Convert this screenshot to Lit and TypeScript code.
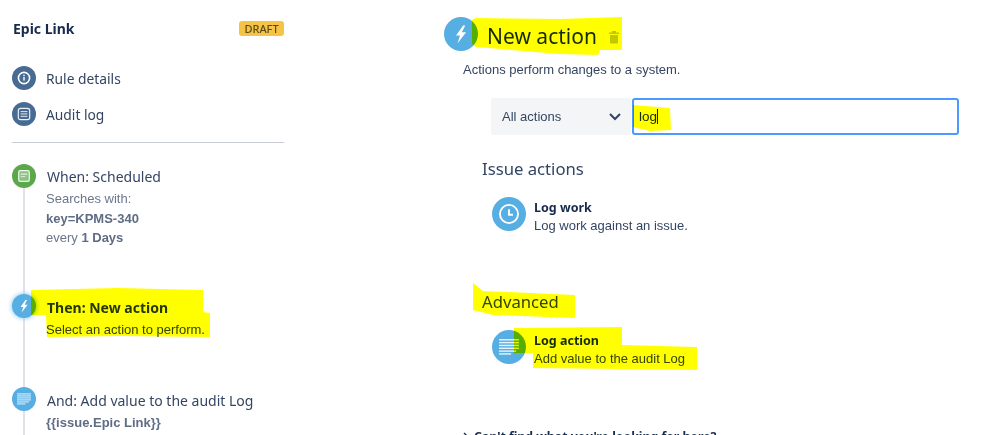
import { LitElement, html, css, svg } from "lit";
import { customElement } from "lit/decorators.js";

const bolt = svg`<path d="M13.5 6 8.5 13h2.8l-1.7 5.5 6-7.7h-3L15 6z" fill="#fff"/>`;
const lines = svg`<g fill="#fff" opacity=".85"><rect x="5" y="6.4" width="14" height="1"/><rect x="5" y="8.4" width="14" height="1"/><rect x="5" y="10.4" width="14" height="1"/><rect x="5" y="12.4" width="14" height="1"/><rect x="5" y="14.4" width="12" height="1"/><rect x="5" y="16.4" width="8.5" height="1"/></g>`;
const info = svg`<circle cx="12" cy="12" r="5.6" fill="none" stroke="#fff" stroke-width="1.6"/><rect x="11.3" y="11" width="1.4" height="3.6" fill="#fff"/><rect x="11.3" y="8.8" width="1.4" height="1.4" fill="#fff"/>`;
const audit = svg`<rect x="6.3" y="6.3" width="11.4" height="11.4" rx="2.2" fill="none" stroke="#fff" stroke-width="1.2" opacity=".9"/><g fill="#fff" opacity=".75"><rect x="8.6" y="9" width="6.8" height="1.1"/><rect x="8.6" y="11.4" width="6.8" height="1.1"/><rect x="8.6" y="13.8" width="6.8" height="1.1"/></g>`;
const cal = svg`<rect x="6.7" y="6.7" width="10.6" height="10.6" rx="1.6" fill="#ffffff55" stroke="#fff" stroke-width="1.2" opacity=".9"/><rect x="8.6" y="9.5" width="6.8" height="1.2" fill="#fff" opacity=".8"/><rect x="8.6" y="12" width="4.8" height="1.2" fill="#fff" opacity=".6"/>`;
const clock = svg`<circle cx="12" cy="12" r="6.4" fill="none" stroke="#fff" stroke-width="1.3"/><path d="M12 8.6v3.9h2.8" fill="none" stroke="#fff" stroke-width="1.3"/>`;

const highlights = [
  "31,290 118,288 203,290 203,312 210,313 210,337 120,336 47,337 46,315 31,315",
  "472,20 476,18 560,19 622,17 622,50 600,50 598,55 560,54 476,47 472,44",
  "633,105 670,108 671,130 650,131 633,127",
  "473,283 483,291 575,295 575,318 493,315 473,310",
  "514,328 622,327 622,345 697,347 697,370 620,369 533,368 533,353 514,353",
];

@customElement("app-root")
export class AppRoot extends LitElement {
  static styles = css`
    :host {
      display: block;
      position: relative;
      width: 998px;
      height: 435px;
      overflow: hidden;
      background: #fff;
      color: #253858;
      font-family: "Liberation Sans", Arial, sans-serif;
      font-size: 13px;
    }
    .page { display: flex; height: 435px; }
    .side { width: 272px; margin-left: 12px; flex: none; }
    .head {
      display: flex; justify-content: space-between; align-items: center;
      height: 15px; margin-top: 21px; margin-bottom: 30px;
    }
    .title { font: 700 14px "Noto Sans", sans-serif; color: #172b4d; margin-left: 1px; }
    .badge {
      width: 45px; height: 15px; text-align: center; border-radius: 3px;
      background: #f5c445; color: #5b4a18; font: 500 11px/15px "Noto Sans", sans-serif;
    }
    .nav { display: flex; align-items: center; gap: 10px; height: 24px; margin-bottom: 12px; font: 13.8px "Noto Sans", sans-serif; color: #344563; }
    .rule { height: 1px; background: #c8ccd3; margin-top: 16px; margin-bottom: 22px; }
    .ico { display: block; flex: none; border-radius: 50%; }
    .s24 { width: 24px; height: 24px; }
    .s34 { width: 34px; height: 34px; }
    .navy { background: #476b93; }
    .green { background: #5ba84a; }
    .blue { background: #57aee3; }
    .glow { box-shadow: 0 0 4px 1px #a5d3f2; }
    .flow { position: relative; }
    .flow::before {
      content: ""; position: absolute; left: 11px; top: 10px; bottom: -200px; width: 2px; background: #dfe1e6;
    }
    .step { position: relative; display: flex; gap: 10px; }
    .step .ico { margin-top: -1px; }
    .when { height: 130px; }
    .then { height: 93px; }
    .step-title { font: 14px/18px "Noto Sans", sans-serif; color: #344563; padding-top: 4px; margin-bottom: 3px; margin-left: 1px; }
    .when .step-title { padding-top: 3px; }
    .then .step-title { font-weight: 700; color: #253858; }
    .step-body { color: #6b778c; font-size: 13px; line-height: 19.5px; }
    .then .step-body { color: #344563; }
    .step-body b { color: #5e6c84; }

    .main { margin-left: 160px; flex: 1; }
    .main-head { display: flex; align-items: center; gap: 9px; margin-top: 17px; height: 34px; }
    .main-head h1 { margin: 0; padding-top: 5px; font: 400 21px/29px "Noto Sans", sans-serif; color: #172b4d; }
    .trash { margin-top: 6px; margin-left: 2px; display: block; }
    .lead { margin: 12px 0 0 19px; line-height: 14px; font-size: 13px; color: #344563; }
    .search { display: flex; margin: 21px 0 0 47px; height: 37px; gap: 1px; }
    .select {
      width: 140px; background: #f4f5f7; border-radius: 3px; display: flex; align-items: center;
      justify-content: space-between; padding: 0 9px 0 11px; box-sizing: border-box; color: #344563; font-size: 13px;
    }
    .input {
      width: 327px; box-sizing: border-box; border: 2px solid #4c9aff; border-radius: 3px;
      display: flex; align-items: center; padding-left: 5px; color: #172b4d; font-size: 13.5px;
    }
    .caret { display: inline-block; width: 1px; height: 15px; background: #172b4d; }
    h2 { margin: 0 0 0 38px; font: 400 16.7px/24px "Noto Sans", sans-serif; color: #344563; }
    .sec1 { margin-top: 22px; }
    .sec2 { margin-top: 59px; }
    .card { display: flex; gap: 8px; margin: 16px 0 0 48px; height: 34px; }
    .card-text { padding-top: 2px; }
    .card-t { font: 700 12.5px/17px "Noto Sans", sans-serif; color: #172b4d; }
    .card-d { font-size: 13px; line-height: 17px; color: #344563; margin-top: 1px; }
    .more { margin: 64px 0 0 19px; font: 700 12.3px/18px "Noto Sans", sans-serif; color: #172b4d; display: flex; gap: 5px; align-items: center; }
    .overlay { position: absolute; inset: 0; width: 998px; height: 435px; mix-blend-mode: multiply; pointer-events: none; }
  `;

  private icon(cls: string, body: unknown) {
    return html`<svg class="ico ${cls}" viewBox="0 0 24 24">${body}</svg>`;
  }

  render() {
    return html`
      <div class="page">
        <aside class="side">
          <div class="head"><span class="title">Epic Link</span><span class="badge">DRAFT</span></div>
          <div class="nav">${this.icon("s24 navy", info)}<span>Rule details</span></div>
          <div class="nav">${this.icon("s24 navy", audit)}<span>Audit log</span></div>
          <div class="rule"></div>
          <div class="flow">
            <div class="step when">
              ${this.icon("s24 green", cal)}
              <div>
                <div class="step-title">When: Scheduled</div>
                <div class="step-body">Searches with:<br /><b>key=KPMS-340</b><br />every <b>1 Days</b></div>
              </div>
            </div>
            <div class="step then">
              ${this.icon("s24 blue glow", bolt)}
              <div>
                <div class="step-title">Then: New action</div>
                <div class="step-body">Select an action to perform.</div>
              </div>
            </div>
            <div class="step">
              ${this.icon("s24 blue", lines)}
              <div>
                <div class="step-title">And: Add value to the audit Log</div>
                <div class="step-body"><b>{{issue.Epic Link}}</b></div>
              </div>
            </div>
          </div>
        </aside>
        <main class="main">
          <div class="main-head">
            ${this.icon("s34 blue", bolt)}
            <h1>New action</h1>
            <svg class="trash" width="12" height="14" viewBox="0 0 12 14">
              <path d="M1 2.5h10v1.5H1zM4 1h4v1.5H4zM2 5h8v7.5a1 1 0 0 1-1 1H3a1 1 0 0 1-1-1z" fill="#c1c7d0" />
            </svg>
          </div>
          <p class="lead">Actions perform changes to a system.</p>
          <div class="search">
            <div class="select">
              <span>All actions</span>
              <svg width="14" height="10" viewBox="0 0 14 10"><path d="M2 2l5 5 5-5" fill="none" stroke="#344563" stroke-width="2" /></svg>
            </div>
            <div class="input">log<span class="caret"></span></div>
          </div>
          <h2 class="sec1">Issue actions</h2>
          <div class="card">
            ${this.icon("s34 blue", clock)}
            <div class="card-text"><div class="card-t">Log work</div><div class="card-d">Log work against an issue.</div></div>
          </div>
          <h2 class="sec2">Advanced</h2>
          <div class="card">
            ${this.icon("s34 blue", lines)}
            <div class="card-text"><div class="card-t">Log action</div><div class="card-d">Add value to the audit Log</div></div>
          </div>
          <div class="more">
            <svg width="6" height="10" viewBox="0 0 6 10"><path d="M1 1l4 4-4 4" fill="none" stroke="#172b4d" stroke-width="1.4" /></svg>
            <span>Can't find what you're looking for here?</span>
          </div>
        </main>
      </div>
      <svg class="overlay" viewBox="0 0 998 435">
        ${highlights.map((p) => svg`<polygon points=${p} fill="#ffff00" />`)}
      </svg>
    `;
  }
}
